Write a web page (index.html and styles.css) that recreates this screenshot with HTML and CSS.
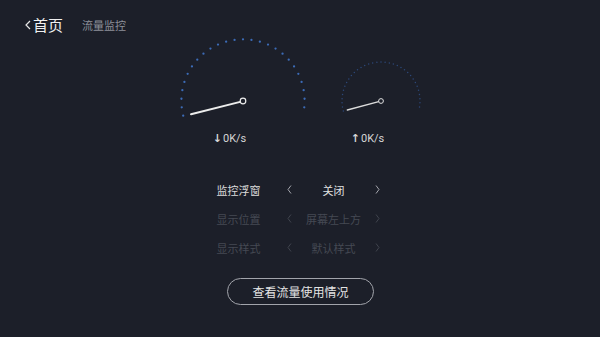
FILE: index.html
```html
<html>
    <head>
        <title>流量监控</title>
        <link rel="stylesheet" href="styles.css">
    </head>
    <body>
        <div class="header">
            <svg class="back" width="6" height="10" viewBox="0 0 6 10">
                <polyline points="5,1 1,5 5,9" fill="none" stroke="#e6e6e6" stroke-width="1.2"/>
            </svg>
            <span class="home">首页</span>
            <span class="title">流量监控</span>
        </div>

        <div class="gauges">
            <div class="gauge">
                <svg width="130" height="90" viewBox="0 0 130 90">
                    <path d="M5.2 82.7 A61.6 61.6 0 1 1 124.8 82.7" pathLength="26" fill="none"
                          stroke="#3c6bb6" stroke-width="2.3" stroke-linecap="round" stroke-dasharray="0 1"/>
                    <line x1="13" y1="81.3" x2="62.2" y2="68.9" stroke="#ececec" stroke-width="2" stroke-linecap="round"/>
                    <circle cx="65" cy="68" r="2.8" fill="#1c1f29" stroke="#ececec" stroke-width="1.2"/>
                </svg>
                <div class="speed"><span class="arrow">↓</span>0K/s</div>
            </div>
            <div class="gauge small">
                <svg width="90" height="90" viewBox="0 0 90 90">
                    <path d="M7.33 78.09 A39 39 0 1 1 82.67 78.09" pathLength="34" fill="none"
                          stroke="#2c4777" stroke-width="1.5" stroke-linecap="round" stroke-dasharray="0 1"/>
                    <line x1="11.3" y1="77" x2="42.7" y2="68.6" stroke="#dcdcdc" stroke-width="1.3" stroke-linecap="round"/>
                    <circle cx="45" cy="68" r="2.4" fill="#1c1f29" stroke="#e0e0e0" stroke-width="1"/>
                </svg>
                <div class="speed"><span class="arrow">↑</span>0K/s</div>
            </div>
        </div>

        <div class="options">
            <div class="label">监控浮窗</div>
            <div class="nav"><svg width="5" height="9" viewBox="0 0 5 9"><polyline points="4,0.5 1,4.5 4,8.5"/></svg></div>
            <div class="value">关闭</div>
            <div class="nav"><svg width="5" height="9" viewBox="0 0 5 9"><polyline points="1,0.5 4,4.5 1,8.5"/></svg></div>

            <div class="label off">显示位置</div>
            <div class="nav off"><svg width="5" height="9" viewBox="0 0 5 9"><polyline points="4,0.5 1,4.5 4,8.5"/></svg></div>
            <div class="value off">屏幕左上方</div>
            <div class="nav off"><svg width="5" height="9" viewBox="0 0 5 9"><polyline points="1,0.5 4,4.5 1,8.5"/></svg></div>

            <div class="label off">显示样式</div>
            <div class="nav off"><svg width="5" height="9" viewBox="0 0 5 9"><polyline points="4,0.5 1,4.5 4,8.5"/></svg></div>
            <div class="value off">默认样式</div>
            <div class="nav off"><svg width="5" height="9" viewBox="0 0 5 9"><polyline points="1,0.5 4,4.5 1,8.5"/></svg></div>
        </div>

        <div class="actions">
            <div class="button">查看流量使用情况</div>
        </div>
    </body>
</html>
```

FILE: styles.css
```css
body {
    margin: 0;
    background-color: #1c1f29;
    font-family: "Noto Sans CJK SC", "Noto Sans", sans-serif;
    color: #e6e6e6;
    overflow: hidden;
}

.header {
    height: 35px;
    box-sizing: border-box;
    padding: 14px 0 0 25px;
    display: flex;
    align-items: center;
    line-height: 20px;
}

.header .back {
    margin-right: 2px;
    margin-top: 0;
}

.header .home {
    font-size: 15px;
    color: #f0f0f0;
}

.header .title {
    font-size: 11px;
    color: #8d9099;
    margin-left: 19px;
}

.gauges {
    display: flex;
    justify-content: center;
    gap: 28px;
    padding-left: 4px;
    margin-top: -2px;
}

.gauge {
    display: flex;
    flex-direction: column;
    align-items: center;
}

.gauge svg {
    display: block;
}

.speed {
    margin-top: 9px;
    margin-right: 27px;
    font-family: Roboto, "Noto Sans", sans-serif;
    font-size: 11px;
    line-height: 14px;
    color: #d6d6d6;
}

.speed .arrow {
    font-family: "DejaVu Sans", sans-serif;
    font-size: 11px;
    font-weight: bold;
    margin-right: 1px;
}

.options {
    display: grid;
    grid-template-columns: 67px 12px 76px 12px;
    grid-auto-rows: 29px;
    justify-content: center;
    align-items: center;
    margin-top: 29px;
    font-size: 11px;
}

.options .label {
    color: #dcdcdc;
}

.options .nav {
    display: flex;
    justify-content: center;
}

.options .nav svg {
    display: block;
}

.options .nav polyline {
    fill: none;
    stroke: #a3a5ac;
    stroke-width: 1;
}

.options .nav.off polyline {
    stroke: #3f434d;
}

.options .value {
    text-align: center;
    color: #e2e2e2;
}

.options .off {
    color: #454953;
}

.actions {
    display: flex;
    justify-content: center;
    margin-top: 16px;
}

.button {
    width: 147px;
    height: 27px;
    box-sizing: border-box;
    border: 1px solid #a2a4ab;
    border-radius: 14px;
    display: flex;
    align-items: center;
    justify-content: center;
    font-size: 12px;
    color: #e4e4e4;
    margin-left: 1px;
}
```
